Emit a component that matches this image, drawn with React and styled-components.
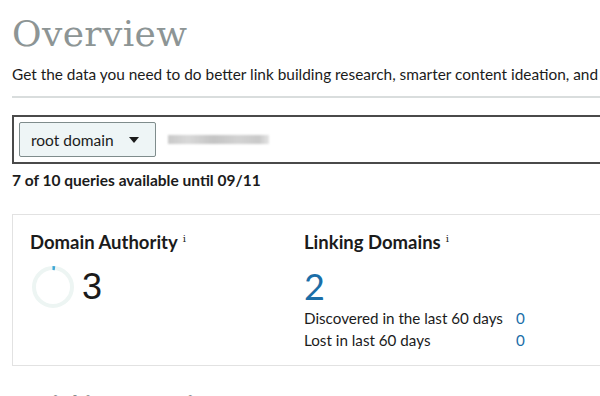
import React from "react";
import styled, { createGlobalStyle } from "styled-components";

const GlobalStyle = createGlobalStyle`
  html, body {
    margin: 0;
    padding: 0;
    background: #ffffff;
    overflow: hidden;
  }
  body {
    font-family: Lato, "Open Sans", sans-serif;
    color: #1b1b1b;
  }
`;

const Page = styled.div`
  width: 600px;
  height: 396px;
  overflow: hidden;
  padding: 12px 0 0 12px;
  box-sizing: border-box;
`;

const Inner = styled.div`
  width: 640px;
`;

const Title = styled.h1`
  margin: 0;
  font-family: "DejaVu Serif", "Liberation Serif", serif;
  font-weight: 300;
  font-size: 36px;
  line-height: 44px;
  color: #8d9595;
  letter-spacing: 0.4px;
`;

const Lead = styled.p`
  margin: 8px 0 0;
  font-size: 15.4px;
  line-height: 20px;
  white-space: nowrap;
`;

const Divider = styled.hr`
  margin: 12px 0 0;
  border: none;
  height: 2px;
  background: #d9dddd;
`;

const SearchBox = styled.div`
  margin-top: 17px;
  height: 49px;
  border: 2px solid #4a4a4a;
  box-sizing: border-box;
  display: flex;
  align-items: center;
  padding-left: 5px;
  gap: 12px;
`;

const Select = styled.div`
  width: 137px;
  height: 35px;
  box-sizing: border-box;
  background: #eef5f6;
  border: 1px solid #7f8c8c;
  border-radius: 2px;
  display: flex;
  align-items: center;
  padding: 0 16px 0 11px;
  justify-content: space-between;
  font-size: 15.5px;
`;

const Caret = styled.span`
  width: 0;
  height: 0;
  border-left: 5px solid transparent;
  border-right: 5px solid transparent;
  border-top: 6px solid #1b1b1b;
`;

const Blurred = styled.span`
  display: block;
  width: 101px;
  height: 9px;
  background: linear-gradient(90deg, #c9c9c9 0%, #d8d8d8 20%, #c4c4c4 45%, #d2d2d2 70%, #c9c9c9 90%, #e4e4e4 100%);
  filter: blur(1px);
`;

const Quota = styled.p`
  margin: 6px 0 0;
  font-size: 15.5px;
  font-weight: 700;
  line-height: 20px;
`;

const Card = styled.div`
  margin-top: 24px;
  height: 152px;
  border: 1px solid #e2e2e2;
  box-sizing: border-box;
  display: grid;
  grid-template-columns: 274px 1fr;
  padding: 12px 0 0 17px;
`;

const Metric = styled.div`
  display: flex;
  flex-direction: column;
`;

const MetricTitle = styled.h2`
  margin: 0;
  font-size: 18.5px;
  font-weight: 700;
  line-height: 24px;
  white-space: nowrap;
  sup {
    font-family: "DejaVu Serif", serif;
    font-weight: 400;
    font-size: 10px;
    margin-left: 5px;
    vertical-align: 7px;
  }
`;

const ScoreRow = styled.div`
  display: flex;
  align-items: center;
  gap: 6px;
  margin-top: 10px;
`;

const Score = styled.span`
  font-family: ${(p) => (p.$blue ? "Lato, sans-serif" : '"Liberation Sans", Arial, sans-serif')};
  font-size: 36px;
  line-height: 44px;
  margin-top: ${(p) => (p.$blue ? "10px" : "0")};
  color: ${(p) => (p.$blue ? "#1b6ea8" : "#1b1b1b")};
`;

const Stats = styled.div`
  display: grid;
  grid-template-columns: 212px auto;
  font-size: 15.2px;
  line-height: 22px;
  margin-top: -1px;
`;

const StatValue = styled.span`
  color: #1b6ea8;
`;

const NextHeading = styled.h2`
  margin: 24px 0 0 28px;
  font-size: 24px;
  font-weight: 700;
  color: #8a8f8f;
  line-height: 30px;
`;

const Ring = () => (
  <svg width="46" height="46" viewBox="0 0 46 46">
    <circle cx="23" cy="23" r="19" fill="none" stroke="#edf5f3" strokeWidth="4" />
    <path d="M22.5 4 A19 19 0 0 1 25 4.17" fill="none" stroke="#3fa7d6" strokeWidth="4" />
  </svg>
);

export default function App() {
  return (
    <Page>
      <GlobalStyle />
      <Inner>
        <Title>Overview</Title>
        <Lead>
          Get the data you need to do better link building research, smarter content ideation, and more.
        </Lead>
        <Divider />
        <SearchBox>
          <Select>
            root domain
            <Caret />
          </Select>
          <Blurred />
        </SearchBox>
        <Quota>7 of 10 queries available until 09/11</Quota>
        <Card>
          <Metric>
            <MetricTitle>
              Domain Authority<sup>i</sup>
            </MetricTitle>
            <ScoreRow>
              <Ring />
              <Score>3</Score>
            </ScoreRow>
          </Metric>
          <Metric>
            <MetricTitle>
              Linking Domains<sup>i</sup>
            </MetricTitle>
            <Score $blue>2</Score>
            <Stats>
              <span>Discovered in the last 60 days</span>
              <StatValue>0</StatValue>
              <span>Lost in last 60 days</span>
              <StatValue>0</StatValue>
            </Stats>
          </Metric>
        </Card>
        <NextHeading>Linking Domains</NextHeading>
      </Inner>
    </Page>
  );
}
